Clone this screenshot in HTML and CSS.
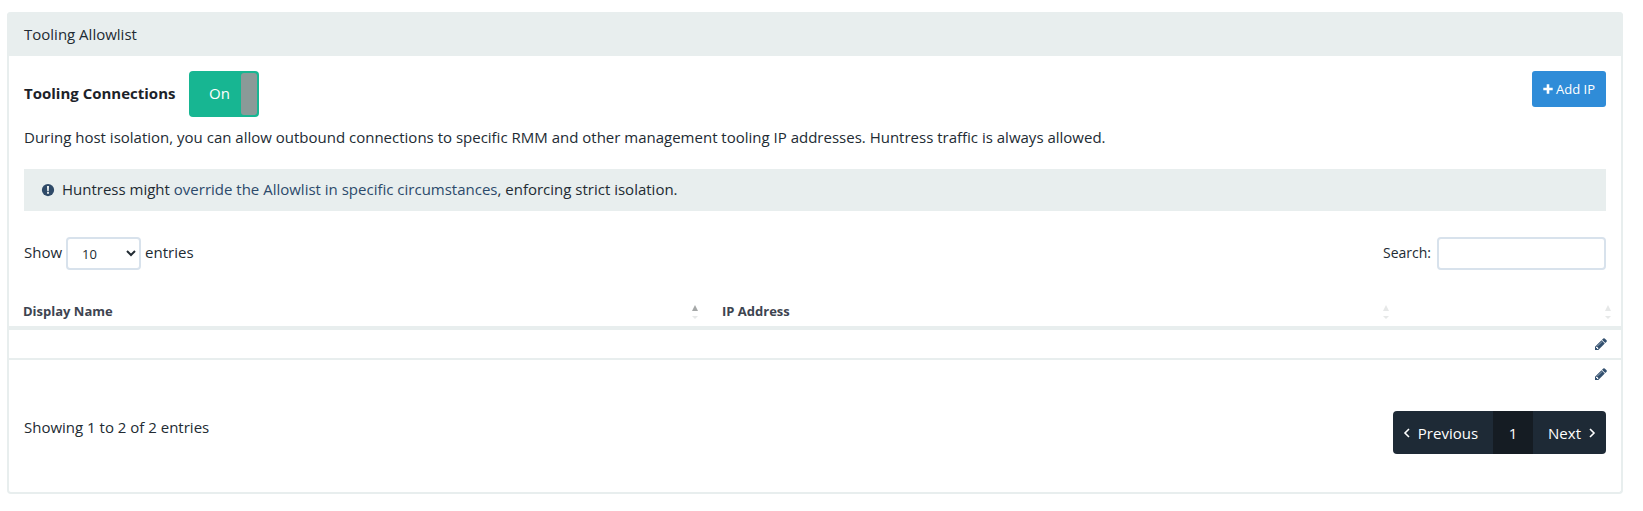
FILE: index.html
```html
<!DOCTYPE html>
<html lang="en">
<head>
<meta charset="utf-8">
<title>Tooling Allowlist</title>
<link rel="stylesheet" href="styles.css">
</head>
<body>
<section class="card">
  <header class="card-head">Tooling Allowlist</header>
  <div class="card-body">
    <div class="top-row">
      <strong class="label">Tooling Connections</strong>
      <div class="toggle"><span class="toggle-text">On</span><span class="toggle-handle"></span></div>
      <button class="add-btn" type="button">
        <svg class="plus" viewBox="0 0 10 10"><path d="M3.7 .3h2.6v3.4h3.4v2.6H6.3v3.4H3.7V6.3H.3V3.7h3.4z"/></svg>Add IP
      </button>
    </div>
    <p class="desc">During host isolation, you can allow outbound connections to specific RMM and other management tooling IP addresses. Huntress traffic is always allowed.</p>
    <div class="alert">
      <svg class="alert-icon" viewBox="0 0 16 16"><circle cx="8" cy="8" r="7"/><path class="alert-mark" d="M6.8 3.4h2.4l-.3 5.6H7.1zM6.9 10h2.2v2.2H6.9z"/></svg>
      <span class="alert-text">Huntress might <a href="#">override the Allowlist in specific circumstances</a>, enforcing strict isolation.</span>
    </div>
    <div class="controls">
      <label class="length">Show
        <select class="length-select"><option>10</option><option>25</option><option>50</option></select>
        entries</label>
      <label class="search">Search: <input class="search-input" type="search"></label>
    </div>
    <table class="grid">
      <thead>
        <tr>
          <th class="col-name"><div class="th-in">Display Name<span class="sort"><i class="up on"></i><i class="down"></i></span></div></th>
          <th class="col-ip"><div class="th-in">IP Address<span class="sort"><i class="up"></i><i class="down"></i></span></div></th>
          <th class="col-act"><div class="th-in"><span></span><span class="sort"><i class="up"></i><i class="down"></i></span></div></th>
        </tr>
      </thead>
      <tbody>
        <tr>
          <td></td><td></td>
          <td class="act"><svg class="pencil" viewBox="0 0 1536 1536"><path d="M363 1408l91-91-235-235-91 91v107h128v128h107zm523-928q0-22-22-22-10 0-17 7l-542 542q-7 7-7 17 0 22 22 22 10 0 17-7l542-542q7-7 7-17zm-54-192l416 416-832 832h-416v-416zm683 96q0 53-37 90l-166 166-416-416 166-165q36-38 90-38 53 0 91 38l235 234q37 39 37 91z"/></svg></td>
        </tr>
        <tr>
          <td></td><td></td>
          <td class="act"><svg class="pencil" viewBox="0 0 1536 1536"><path d="M363 1408l91-91-235-235-91 91v107h128v128h107zm523-928q0-22-22-22-10 0-17 7l-542 542q-7 7-7 17 0 22 22 22 10 0 17-7l542-542q7-7 7-17zm-54-192l416 416-832 832h-416v-416zm683 96q0 53-37 90l-166 166-416-416 166-165q36-38 90-38 53 0 91 38l235 234q37 39 37 91z"/></svg></td>
        </tr>
      </tbody>
    </table>
    <div class="foot">
      <div class="info">Showing 1 to 2 of 2 entries</div>
      <nav class="pager">
        <a class="page prev" href="#"><svg class="chev" viewBox="0 0 8 12"><path d="M6 2L2 6l4 4"/></svg>Previous</a>
        <a class="page current" href="#">1</a>
        <a class="page next" href="#">Next<svg class="chev" viewBox="0 0 8 12"><path d="M2 2l4 4-4 4"/></svg></a>
      </nav>
    </div>
  </div>
</section>
</body>
</html>
```
FILE: styles.css
```css
* { box-sizing: border-box; }
body {
  margin: 12px 20px 0 7px;
  font-family: "Open Sans", "Noto Sans", sans-serif;
  font-size: 15px;
  line-height: 20px;
  color: #222b33;
  background: #fff;
}
.card {
  height: 482px;
  border: 2px solid #e8eeee;
  border-top: 0;
  border-radius: 4px;
}
.card-head {
  height: 44px;
  margin: 0 -2px;
  padding: 12px 17px;
  background: #e8eeee;
  border-radius: 4px 4px 0 0;
}
.card-body { padding: 15px 15px 0; }
.top-row { display: flex; align-items: center; height: 46px; }
.label { font-weight: 700; width: 165px; margin-bottom: 3px; color: #1c2229; }
.toggle {
  display: flex;
  align-items: stretch;
  width: 70px;
  height: 46px;
  padding: 2px;
  background: #17b692;
  border-radius: 4px;
}
.toggle-text { flex: 1; text-align: center; line-height: 40px; color: #fff; font-size: 15px; padding-left: 7px; }
.toggle-handle { width: 16px; background: #8a9a98; border-radius: 3px; }
.add-btn {
  display: flex;
  align-items: center;
  gap: 3px;
  align-self: flex-start;
  margin-left: auto;
  height: 36px;
  padding: 0 11px;
  border: 0;
  border-radius: 3px;
  background: #2f8cd8;
  color: #fff;
  font: 13px "Open Sans", "Noto Sans", sans-serif;
}
.plus { width: 10px; height: 10px; fill: #fff; }
.desc { margin: 10px 0 0; }
.alert {
  display: flex;
  align-items: center;
  gap: 7px;
  height: 42px;
  margin-top: 22px;
  padding: 0 17px;
  background: #e8eeee;
}
.alert-icon { width: 14px; height: 14px; fill: #2f4a68; }
.alert-mark { fill: #e8eeee; }
.alert-text { margin-bottom: 2px; }
.alert a { color: #2c4a6b; text-decoration: none; }
.controls {
  display: flex;
  justify-content: space-between;
  height: 33px;
  margin-top: 26px;
  line-height: 31px;
}
.length, .search { display: flex; align-items: flex-start; gap: 4px; }
.search { gap: 6px; font-size: 14px; }
.length-select {
  width: 75px;
  height: 33px;
  padding: 0 10px;
  border: 2px solid #d8e2ec;
  border-radius: 4px;
  background: #fff;
  color: #222b33;
  font: 13px "Open Sans", "Noto Sans", sans-serif;
}
.search-input {
  width: 169px;
  height: 33px;
  border: 2px solid #d8e2ec;
  border-radius: 4px;
  background: #fff;
}
.grid {
  width: calc(100% + 30px);
  margin: 29px -15px 0;
  border-collapse: separate;
  border-spacing: 0;
  table-layout: fixed;
}
.grid th {
  height: 31px;
  padding: 0 8px 3px 14px;
  border-bottom: 4px solid #e8eeee;
  font-size: 13px;
  font-weight: 700;
  color: #3d4450;
  text-align: left;
}
.col-name { width: 699px; }
.col-act { width: 222px; }
.th-in { display: flex; justify-content: space-between; align-items: center; }
.sort { display: flex; flex-direction: column; align-items: center; gap: 5px; width: 10px; margin-top: 2px; }
.sort i { display: block; width: 0; height: 0; border-left: 3.5px solid transparent; border-right: 3.5px solid transparent; }
.sort .up { border-bottom: 6px solid #e6e8e8; }
.sort .up.on { border-bottom-color: #a5a8a8; }
.sort .down { border-top: 3px solid #e6e8e8; }
.grid td { height: 30px; padding: 0 14px; border-bottom: 2px solid #e8eeee; }
.grid tr:last-child td { border-bottom: 0; }
.act { text-align: right; vertical-align: top; }
.pencil { display: block; width: 12px; height: 12px; margin: 8px 0 0 auto; fill: #33506f; }
.foot { display: flex; justify-content: space-between; align-items: center; margin-top: 21px; }
.info { margin-bottom: 12px; }
.pager { display: flex; height: 43px; border-radius: 4px; overflow: hidden; background: #1e2a36; }
.page {
  display: flex;
  align-items: center;
  gap: 7px;
  color: #fff;
  text-decoration: none;
}
.prev { padding: 0 15px 0 10px; }
.next { padding: 0 10px 0 15px; }
.current { width: 40px; justify-content: center; background: #151c23; }
.chev { width: 8px; height: 12px; fill: none; stroke: #fff; stroke-width: 1.6; }
```
